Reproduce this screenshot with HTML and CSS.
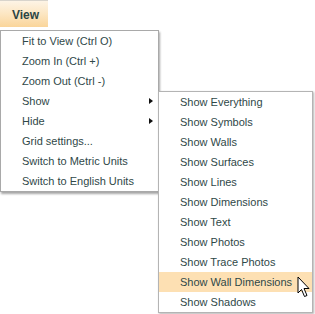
FILE: index.html
```html
<!DOCTYPE html>
<html lang="en">
  <head>
    <meta charset="UTF-8" />
    <title>View Menu</title>
    <link rel="stylesheet" href="styles.css">
  </head>
  <body>
    <div class="menubar">
      <div class="menu-button">View</div>
    </div>

    <ul class="menu">
      <li>Fit to View (Ctrl O)</li>
      <li>Zoom In (Ctrl +)</li>
      <li>Zoom Out (Ctrl -)</li>
      <li class="has-sub open">
        Show
        <ul class="menu submenu">
          <li>Show Everything</li>
          <li>Show Symbols</li>
          <li>Show Walls</li>
          <li>Show Surfaces</li>
          <li>Show Lines</li>
          <li>Show Dimensions</li>
          <li>Show Text</li>
          <li>Show Photos</li>
          <li>Show Trace Photos</li>
          <li class="hover">
            Show Wall Dimensions
            <svg class="cursor" width="14" height="22" viewBox="0 0 14 22">
              <path d="M1 1 L1 17 L4.5 13.5 L7.5 20.5 L10 19.5 L7 12.5 L12 12.5 Z" fill="#fff" stroke="#000" stroke-width="1" stroke-linejoin="miter" />
            </svg>
          </li>
          <li>Show Shadows</li>
        </ul>
      </li>
      <li class="has-sub">Hide</li>
      <li>Grid settings...</li>
      <li>Switch to Metric Units</li>
      <li>Switch to English Units</li>
    </ul>
  </body>
</html>
```

FILE: styles.css
```css
body {
  margin: 0;
  font-family: "Liberation Sans", Arial, sans-serif;
  font-size: 11px;
  color: #2f4848;
  background: #fff;
  height: 314px;
  overflow: hidden;
}

.menubar {
  height: 30px;
}

.menu-button {
  width: 48px;
  height: 27px;
  box-sizing: border-box;
  padding-left: 12px;
  line-height: 28px;
  font-size: 12px;
  font-weight: bold;
  color: #2b4444;
  border-top: 1px solid #d8d4cc;
  background: linear-gradient(to bottom, #fdf4e6 0%, #fce6c2 50%, #fad59a 100%);
}

.menu {
  list-style: none;
  margin: 0;
  padding: 0;
  width: 157px;
  background: #fff;
  border: 1px solid #a9a9a9;
  box-shadow: 1px 2px 2px rgba(0, 0, 0, 0.35);
}

.menu li {
  position: relative;
  height: 20px;
  line-height: 20px;
  padding-left: 21px;
  white-space: nowrap;
}

.has-sub::after {
  content: "";
  position: absolute;
  right: 5px;
  top: 7px;
  border-left: 4px solid #111;
  border-top: 3px solid transparent;
  border-bottom: 3px solid transparent;
}

.submenu {
  position: absolute;
  left: 157px;
  top: 0;
  width: 153px;
  border-color: #b4b4b4;
  box-shadow: 1px 1px 2px rgba(0, 0, 0, 0.3);
}

.submenu li {
  padding-left: 21px;
}

.submenu .hover {
  background: #fde0b3;
}

.cursor {
  position: absolute;
  left: 138px;
  top: 4px;
}
```
